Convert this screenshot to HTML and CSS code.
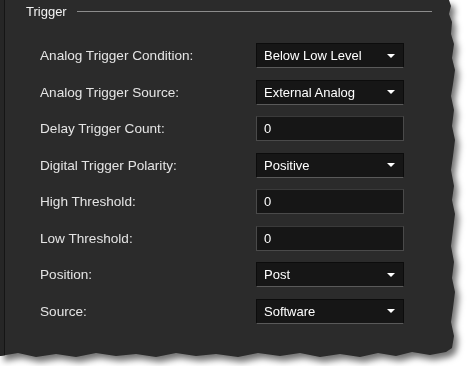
FILE: index.html
```html
<!DOCTYPE html>
<html lang="en">
<head>
  <meta charset="UTF-8">
  <title>Trigger</title>
  <link rel="stylesheet" href="styles.css">
</head>
<body>
  <div class="shot">
    <div class="panel">
      <div class="legend">
        <span class="legend-title">Trigger</span>
        <span class="legend-line"></span>
      </div>

      <div class="fields">
        <div class="row">
          <span class="label">Analog Trigger Condition:</span>
          <div class="select"><span>Below Low Level</span><i class="arrow"></i></div>
        </div>
        <div class="row">
          <span class="label">Analog Trigger Source:</span>
          <div class="select"><span>External Analog</span><i class="arrow"></i></div>
        </div>
        <div class="row">
          <span class="label">Delay Trigger Count:</span>
          <div class="input">0</div>
        </div>
        <div class="row">
          <span class="label">Digital Trigger Polarity:</span>
          <div class="select"><span>Positive</span><i class="arrow"></i></div>
        </div>
        <div class="row">
          <span class="label">High Threshold:</span>
          <div class="input">0</div>
        </div>
        <div class="row">
          <span class="label">Low Threshold:</span>
          <div class="input">0</div>
        </div>
        <div class="row">
          <span class="label">Position:</span>
          <div class="select"><span>Post</span><i class="arrow"></i></div>
        </div>
        <div class="row">
          <span class="label">Source:</span>
          <div class="select"><span>Software</span><i class="arrow"></i></div>
        </div>
      </div>
    </div>
  </div>
</body>
</html>
```

FILE: styles.css
```css
body { margin: 0; background: #fff; font-family: "Liberation Sans", Arial, sans-serif; font-size: 13px; }

/* torn screenshot edge */
.shot { width: 462px; height: 366px; filter: drop-shadow(4px 5px 3px rgba(0,0,0,0.55)); }
.panel {
  width: 458px; height: 362px; box-sizing: border-box;
  background: #2b2b2b; color: #e6e6e6;
  border-left: 4px solid #262626; box-shadow: inset 1px 0 0 #151515;
  padding: 2px 0 0 22px;
  clip-path: polygon(0 0, 449px 0, 451px 6px, 449px 14px, 452px 22px, 451px 34px, 454px 44px, 452px 58px, 455px 70px, 453px 84px, 451px 96px, 454px 110px, 452px 126px, 455px 140px, 453px 156px, 451px 170px, 454px 186px, 452px 200px, 455px 214px, 453px 230px, 451px 246px, 454px 262px, 452px 278px, 455px 292px, 453px 308px, 451px 322px, 454px 336px, 452px 348px, 446px 352px, 430px 355px, 412px 352px, 396px 356px, 378px 353px, 360px 357px, 340px 354px, 320px 357px, 300px 353px, 280px 356px, 258px 353px, 238px 357px, 216px 354px, 196px 356px, 176px 353px, 156px 357px, 136px 354px, 116px 356px, 96px 353px, 76px 357px, 56px 354px, 36px 357px, 18px 353px, 0 356px);
}

.legend { display: flex; align-items: center; height: 18px; padding-right: 26px; }
.legend-title { color: #f2f2f2; }
.legend-line { flex: 1; height: 1px; background: #8c8c8c; margin-left: 10px; margin-top: 1px; }

.fields { display: flex; flex-direction: column; gap: 11.5px; padding: 23px 0 0 14px; }
.row { display: flex; align-items: center; height: 25px; }
.label { width: 216px; color: #e4e4e4; font-size: 13.6px; }

.select, .input {
  width: 148px; height: 25px; box-sizing: border-box;
  display: flex; align-items: center; padding: 0 8px 0 7px;
  background: #161616; color: #fff;
}
.select { border: 1px solid #0c0c0c; border-bottom-color: #5a5a5a; justify-content: space-between; }
.input { border: 1px solid #4a4a4a; border-top-color: #3a3a3a; }
.arrow { width: 0; height: 0; border-left: 4px solid transparent; border-right: 4px solid transparent; border-top: 4px solid #fff; }
```
